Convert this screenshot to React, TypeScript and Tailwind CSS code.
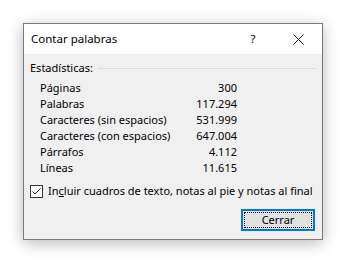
import React from 'react';

const stats: { label: string; value: string }[] = [
  { label: 'Páginas', value: '300' },
  { label: 'Palabras', value: '117.294' },
  { label: 'Caracteres (sin espacios)', value: '531.999' },
  { label: 'Caracteres (con espacios)', value: '647.004' },
  { label: 'Párrafos', value: '4.112' },
  { label: 'Líneas', value: '11.615' },
];

export default function App() {
  return (
    <div className="w-[363px] h-[276px] bg-white pt-[23px] pl-[23px] text-black" style={{ fontFamily: '"Noto Sans", "Open Sans", sans-serif' }}>
      <div className="w-[300px] h-[217px] border border-[#7a7a7a] bg-[#f0f0f0] shadow-[0_3px_14px_rgba(0,0,0,0.28)] flex flex-col text-[11px] leading-[16px] whitespace-nowrap">
        {/* Title bar */}
        <div className="h-[30px] bg-white flex items-center pl-[7px] shrink-0 text-[11.5px]">
          <span className="flex-1">Contar palabras</span>
          <span className="w-[10px] text-center mr-[35px]">?</span>
          <svg width="11" height="11" viewBox="0 0 11 11" className="mr-[18px]">
            <path d="M0.5 0.5 L10.5 10.5 M10.5 0.5 L0.5 10.5" stroke="#111" strokeWidth="1" />
          </svg>
        </div>

        {/* Group header */}
        <div className="mt-[6px] h-[16px] flex items-center pl-[6px] pr-[6px]">
          <span>Estadísticas:</span>
          <div className="flex-1 h-px bg-[#dcdcdc] ml-[5px]" />
        </div>

        {/* Rows */}
        <div className="mt-[4px] flex flex-col pl-[16px]">
          {stats.map(s => (
            <div key={s.label} className="h-[16px] flex items-center">
              <span className="flex-1">{s.label}</span>
              <span className="w-[60px] text-right mr-[85px]">{s.value}</span>
            </div>
          ))}
        </div>

        {/* Checkbox */}
        <div className="mt-[7px] h-[16px] flex items-center pl-[6px]">
          <div className="w-[13px] h-[13px] border border-[#333] bg-white flex items-center justify-center">
            <svg width="11" height="11" viewBox="0 0 11 11">
              <path d="M1.5 5.5 L4 8 L9.5 2.5" fill="none" stroke="#222" strokeWidth="1" />
            </svg>
          </div>
          <span className="ml-[5px]">
            In<span className="underline">c</span>luir cuadros de texto, notas al pie y notas al final
          </span>
        </div>

        {/* Button */}
        <div className="mt-[10px] flex justify-end pr-[7px]">
          <button className="w-[74px] h-[22px] border-2 border-[#0078d7] bg-[#e1e1e1] p-px">
            <div className="w-full h-full border border-dotted border-black flex items-center justify-center">
              Cerrar
            </div>
          </button>
        </div>
      </div>
    </div>
  );
}
